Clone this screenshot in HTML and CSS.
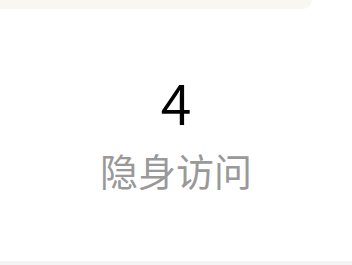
FILE: index.html
```html
<!DOCTYPE html>
<html>
<head>
<meta charset="utf-8">
<link rel="stylesheet" href="styles.css">
</head>
<body>
<div class="page">
  <div class="topbar"></div>
  <div class="stat">
    <div class="num">4</div>
    <div class="label">隐身访问</div>
  </div>
  <div class="bottombar"></div>
</div>
</body>
</html>
```
FILE: styles.css
```css
html, body { margin: 0; padding: 0; background: #fff; }
.page {
  width: 352px;
  height: 265px;
  display: flex;
  flex-direction: column;
  overflow: hidden;
}
.topbar {
  width: 312px;
  height: 9px;
  background: #f8f7f2;
  border-bottom-right-radius: 16px;
  flex: none;
}
.stat {
  flex: 1;
  display: flex;
  flex-direction: column;
  align-items: center;
  padding-top: 64px;
}
.num {
  font-family: "Noto Sans CJK SC", sans-serif;
  font-size: 56px;
  line-height: 56px;
  color: #000;
  font-weight: 350;
}
.label {
  margin-top: 16px;
  font-family: "Noto Sans CJK SC", sans-serif;
  font-size: 38px;
  line-height: 50px;
  color: #999;
}
.bottombar {
  height: 4px;
  background: #f4f4f4;
  flex: none;
}
```
